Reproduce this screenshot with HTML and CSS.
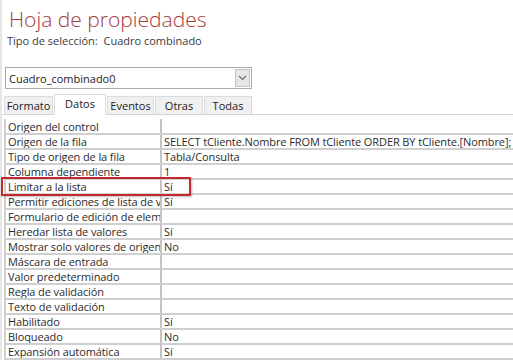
FILE: index.html
```html
<!DOCTYPE html>
<html lang="es">
<head>
  <meta charset="UTF-8">
  <meta name="viewport" content="width=device-width, initial-scale=1.0">
  <title>Hoja de propiedades</title>
  <link rel="stylesheet" href="styles.css">
</head>
<body>
  <div class="sheet">
    <h1 class="title">Hoja de propiedades</h1>
    <p class="selection-type">Tipo de selección:&nbsp; Cuadro combinado</p>

    <div class="combo">
      <span class="combo-value">Cuadro_combinado0</span>
      <span class="combo-button">
        <svg width="9" height="6" viewBox="0 0 9 6"><path d="M1 1 L4.5 4.5 L8 1" fill="none" stroke="#6d6d6d" stroke-width="1.1"/></svg>
      </span>
    </div>

    <div class="tabs">
      <span class="tab">Formato</span>
      <span class="tab active">Datos</span>
      <span class="tab">Eventos</span>
      <span class="tab">Otras</span>
      <span class="tab">Todas</span>
    </div>

    <div class="grid-wrap">
      <table class="props">
        <colgroup>
          <col class="col-name">
          <col>
        </colgroup>
        <tr><td>Origen del control</td><td></td></tr>
        <tr><td>Origen de la fila</td><td>SELECT tCliente.Nombre FROM tCliente ORDER BY tCliente.[Nombre];</td></tr>
        <tr><td>Tipo de origen de la fila</td><td>Tabla/Consulta</td></tr>
        <tr><td>Columna dependiente</td><td>1</td></tr>
        <tr><td>Limitar a la lista</td><td>Sí</td></tr>
        <tr><td>Permitir ediciones de lista de valores</td><td>Sí</td></tr>
        <tr><td>Formulario de edición de elementos de lista</td><td></td></tr>
        <tr><td>Heredar lista de valores</td><td>Sí</td></tr>
        <tr><td>Mostrar solo valores de origen de la fila</td><td>No</td></tr>
        <tr><td>Máscara de entrada</td><td></td></tr>
        <tr><td>Valor predeterminado</td><td></td></tr>
        <tr><td>Regla de validación</td><td></td></tr>
        <tr><td>Texto de validación</td><td></td></tr>
        <tr><td>Habilitado</td><td>Sí</td></tr>
        <tr><td>Bloqueado</td><td>No</td></tr>
        <tr><td>Expansión automática</td><td>Sí</td></tr>
      </table>
      <div class="highlight"></div>
    </div>
  </div>
</body>
</html>
```

FILE: styles.css
```css
* { box-sizing: border-box; }
body {
  margin: 0;
  background: #fff;
  font-family: "Open Sans", "Liberation Sans", sans-serif;
  color: #2b2b2b;
  overflow: hidden;
}
.sheet {
  border-left: 2px solid #e6e6e6;
  min-height: 360px;
  padding-top: 5px;
}
.title {
  margin: 0 0 0 7px;
  font-size: 21px;
  font-weight: 300;
  line-height: 28px;
  color: #a33b3b;
}
.selection-type {
  margin: 0 0 0 5px;
  font-size: 11px;
  line-height: 16px;
  color: #3a3a3a;
}
.combo {
  display: flex;
  align-items: center;
  justify-content: space-between;
  margin: 18px 0 0 3px;
  width: 247px;
  height: 22px;
  border: 1px solid #ababab;
  padding: 0 1px 0 3px;
  font-size: 11px;
  color: #222;
}
.combo-button {
  display: flex;
  align-items: center;
  justify-content: center;
  width: 15px;
  height: 18px;
  background: #e6e6e6;
  border: 1px solid #c4c4c4;
}
.tabs {
  display: flex;
  align-items: flex-end;
  margin-top: 5px;
  height: 21px;
  border-bottom: 1px solid #d4d4d4;
  padding-left: 2px;
}
.tab {
  display: flex;
  align-items: center;
  justify-content: center;
  height: 18px;
  margin-right: 1px;
  background: #f0f0f0;
  border: 1px solid #dcdcdc;
  border-bottom: none;
  font-size: 11px;
  color: #222;
}
.tab:nth-child(1) { width: 49px; }
.tab:nth-child(2) { width: 52px; }
.tab:nth-child(3) { width: 47px; }
.tab:nth-child(4) { width: 48px; }
.tab:nth-child(5) { width: 48px; }
.tab.active {
  height: 21px;
  background: #fff;
  margin-bottom: -1px;
  padding-bottom: 3px;
}
.grid-wrap {
  position: relative;
  margin: 4px 0 0 2px;
}
.props {
  border-collapse: collapse;
  table-layout: fixed;
  width: 520px;
  border-left: 2px solid #cfcfcf;
}
.col-name { width: 156px; }
.props td {
  height: 15px;
  padding: 0 0 0 2px;
  border-bottom: 2px solid #cfcfcf;
  font-size: 11px;
  line-height: 13px;
  letter-spacing: -0.1px;
  white-space: nowrap;
  overflow: hidden;
  color: #2b2b2b;
}
.props td:first-child {
  border-right: 2px solid #c4c4c4;
}
.highlight {
  position: absolute;
  left: -3px;
  top: 58px;
  width: 190px;
  height: 19px;
  border: 2px solid #c3282e;
  box-shadow: 1px 1px 2px rgba(0, 0, 0, 0.25);
}
```
